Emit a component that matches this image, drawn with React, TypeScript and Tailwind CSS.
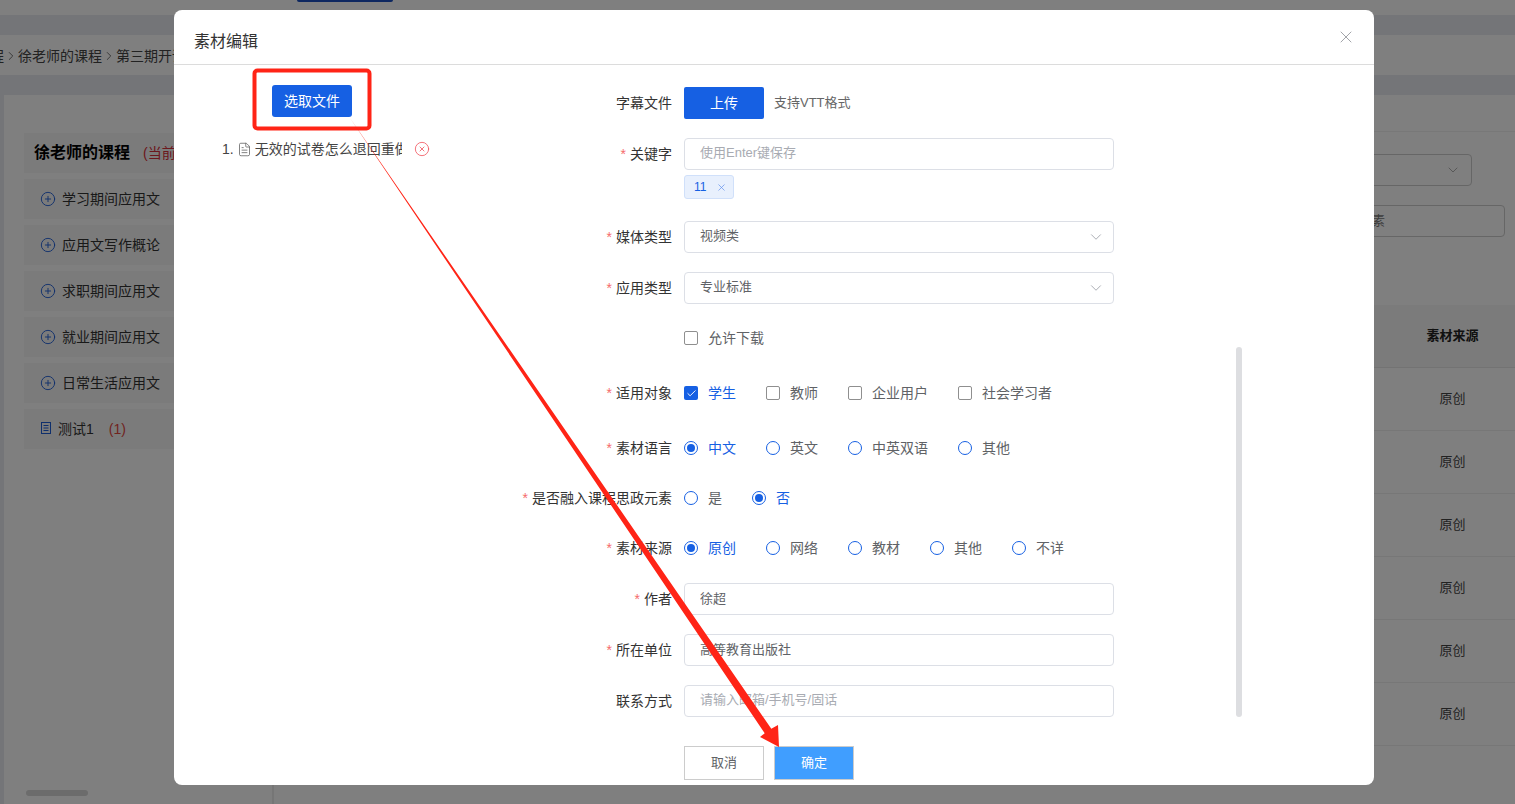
import React from 'react';
import { ChevronDown, CirclePlus, CircleX, FileText, X, ChevronRight, Check } from 'lucide-react';

const sideItems = ['学习期间应用文', '应用文写作概论', '求职期间应用文', '就业期间应用文', '日常生活应用文'];
const tableRows = ['原创', '原创', '原创', '原创', '原创', '原创'];

const Page = () => (
  <div className="h-[804px] flex flex-col bg-[#e8ebf0] overflow-hidden">
    <div className="h-[15px] bg-white shrink-0 pl-[297px]">
      <div className="w-[96px] h-[2px] bg-[#1a4fc0] rounded-b-sm" />
    </div>
    <div className="h-[20px] shrink-0" />
    <div className="h-[40px] bg-white shrink-0 flex items-center text-sm text-[#444] pt-[1px]">
      <span className="-ml-[10px]">程</span>
      <ChevronRight className="w-[14px] h-[14px] text-[#555]" strokeWidth={1.4} />
      <span>徐老师的课程</span>
      <ChevronRight className="w-[14px] h-[14px] text-[#555]" strokeWidth={1.4} />
      <span>第三期开课</span>
    </div>
    <div className="h-[20px] shrink-0" />
    <div className="flex-1 flex ml-[4px] bg-white">
      <div className="w-[270px] shrink-0 flex flex-col pl-[20px] border-r-2 border-[#ececec]">
        <div className="mt-[38px] h-[40px] bg-[#f7f7f7] flex items-center pl-[10px]">
          <span className="text-base font-bold text-black">徐老师的课程</span>
          <span className="ml-[13px] text-sm text-[#d9303a]">(当前</span>
        </div>
        {sideItems.map(t => (
          <div key={t} className="mt-[6px] h-[40px] bg-[#f7f7f7] flex items-center pl-[16px] text-sm text-[#333]">
            <CirclePlus className="w-[16px] h-[16px] text-[#1f5fd8] mr-[6px] -mt-[1px]" strokeWidth={1.4} />
            {t}
          </div>
        ))}
        <div className="mt-[6px] h-[40px] bg-[#f7f7f7] flex items-center pl-[17px] text-sm text-[#333]">
          <svg width="10" height="12" viewBox="0 0 10 12" fill="none" stroke="#1f5fd8" className="mr-[7px] -mt-[2px]">
            <rect x="0.5" y="0.5" width="9" height="11" />
            <path d="M2.5 3.5h5M2.5 6h5M2.5 8.5h5" />
          </svg>
          <span>测试1</span>
          <span className="ml-[15px] text-[#e2483f]">(1)</span>
        </div>
        <div className="mt-auto mb-[8px] ml-[2px] w-[62px] h-[6px] rounded-full bg-[#d8d8d8]" />
      </div>
      <div className="flex-1 flex flex-col">
        <div className="h-[37px] border-b border-[#f0f0f0] shrink-0" />
        <div className="flex justify-end pr-[43px] mt-[22px]">
          <div className="w-[300px] h-[32px] border border-[#ccc] rounded flex items-center justify-end pr-[10px]">
            <ChevronDown className="w-[16px] h-[16px] text-[#888]" strokeWidth={1} />
          </div>
        </div>
        <div className="flex justify-end pr-[10px] mt-[19px]">
          <div className="w-[300px] h-[32px] border border-[#ccc] rounded flex items-center pl-[127px] text-[13px] text-[#777]">
            思政元素
          </div>
        </div>
        <div className="mt-[68px] h-[63px] bg-[#f7f7f7] border-b border-[#e6e6e6] flex items-center justify-end text-[13px] font-bold text-[#222] shrink-0">
          <span className="w-[125px] text-center">素材来源</span>
        </div>
        {tableRows.map((t, i) => (
          <div key={i} className="h-[63px] border-b border-[#eee] flex items-center justify-end text-[13px] text-[#444] shrink-0">
            <span className="w-[125px] text-center">{t}</span>
          </div>
        ))}
      </div>
    </div>
  </div>
);

const Label = ({ text, required }: { text: string; required?: boolean }) => (
  <div className="w-[152px] shrink-0 mr-[12px] -mt-[1px] text-right text-sm text-[#333] whitespace-nowrap">
    {required && <span className="text-[#f56c6c] mr-[4px]">*</span>}
    {text}
  </div>
);

const TextField = ({ value, placeholder }: { value?: string; placeholder?: string }) => (
  <input
    readOnly
    value={value}
    placeholder={placeholder}
    className="w-[430px] h-[32px] border border-[#dcdfe6] rounded px-[15px] pb-[3px] text-[13px] text-[#606266] placeholder:text-[#a8abb2] outline-none"
  />
);

const SelectField = ({ value }: { value: string }) => (
  <div className="w-[430px] h-[32px] border border-[#dcdfe6] rounded pl-[15px] pr-[8px] flex items-center justify-between text-[13px] text-[#606266]">
    <span className="-mt-[2px]">{value}</span>
    <ChevronDown className="w-[18px] h-[18px] text-[#8f939b]" strokeWidth={1} />
  </div>
);

const CheckItem = ({ text, checked }: { text: string; checked?: boolean }) => (
  <div className={`flex items-center gap-[10px] text-sm ${checked ? 'text-[#1660e3]' : 'text-[#606266]'}`}>
    {checked ? (
      <span className="w-[14px] h-[14px] rounded-[2px] bg-[#1660e3] flex items-center justify-center">
        <Check className="w-[11px] h-[11px] text-white" strokeWidth={2} />
      </span>
    ) : (
      <span className="w-[14px] h-[14px] rounded-[2px] border border-[#8f8f8f] bg-white" />
    )}
    <span>{text}</span>
  </div>
);

const RadioItem = ({ text, checked }: { text: string; checked?: boolean }) => (
  <div className={`flex items-center gap-[10px] text-sm ${checked ? 'text-[#1660e3]' : 'text-[#606266]'}`}>
    <span className="w-[14px] h-[14px] rounded-full border border-[#1660e3] bg-white flex items-center justify-center">
      {checked && <span className="w-[8px] h-[8px] rounded-full bg-[#1660e3]" />}
    </span>
    <span>{text}</span>
  </div>
);

const Modal = () => (
  <div className="relative ml-[174px] mt-[10px] w-[1200px] h-[775px] bg-white rounded-lg overflow-hidden">
    <div className="h-[55px] border-b border-[#dcdcdc] flex items-center justify-between pl-[20px] pr-[18px] pt-[9px]">
      <span className="text-base text-[#333]">素材编辑</span>
      <X className="w-[20px] h-[20px] text-[#8f9298] -mt-[10px]" strokeWidth={1} />
    </div>
    <div className="flex">
      <div className="w-[346px] shrink-0 pt-[20px]">
        <button className="ml-[98px] w-[80px] h-[32px] bg-[#1660e3] text-white text-sm rounded-[3px] block">选取文件</button>
        <div className="mt-[22px] ml-[48px] flex items-center text-sm text-[#444] h-[20px]">
          <span>1.</span>
          <FileText className="w-[15px] h-[15px] ml-[3px] text-[#666] shrink-0" strokeWidth={1.3} />
          <span className="ml-[3px] w-[147px] overflow-hidden whitespace-nowrap">无效的试卷怎么退回重做</span>
          <CircleX className="w-[16px] h-[16px] ml-[12px] text-[#f0505a] shrink-0" strokeWidth={1.2} />
        </div>
      </div>
      <div className="flex-1 flex flex-col pt-[22px]">
        <div className="flex items-center h-[32px]">
          <Label text="字幕文件" />
          <button className="w-[80px] h-[32px] bg-[#1660e3] text-white text-sm rounded-[2px]">上传</button>
          <span className="ml-[10px] text-[13px] text-[#666]">支持VTT格式</span>
        </div>
        <div className="flex items-center mt-[19px]">
          <Label text="关键字" required />
          <TextField placeholder="使用Enter键保存" />
        </div>
        <div className="ml-[164px] mt-[5px] w-[50px] h-[24px] bg-[#e8f0fd] border border-[#d0e0fa] rounded-[3px] flex items-center justify-between pl-[9px] pr-[6px] text-xs text-[#1660e3]">
          <span>11</span>
          <X className="w-[11px] h-[11px] text-[#5f8fea]" strokeWidth={1.5} />
        </div>
        <div className="flex items-center mt-[22px]">
          <Label text="媒体类型" required />
          <SelectField value="视频类" />
        </div>
        <div className="flex items-center mt-[19px]">
          <Label text="应用类型" required />
          <SelectField value="专业标准" />
        </div>
        <div className="flex items-center mt-[24px] h-[20px]">
          <Label text="" />
          <CheckItem text="允许下载" />
        </div>
        <div className="flex items-center mt-[35px] h-[20px]">
          <Label text="适用对象" required />
          <div className="flex gap-[30px]">
            <CheckItem text="学生" checked />
            <CheckItem text="教师" />
            <CheckItem text="企业用户" />
            <CheckItem text="社会学习者" />
          </div>
        </div>
        <div className="flex items-center mt-[35px] h-[20px]">
          <Label text="素材语言" required />
          <div className="flex gap-[30px]">
            <RadioItem text="中文" checked />
            <RadioItem text="英文" />
            <RadioItem text="中英双语" />
            <RadioItem text="其他" />
          </div>
        </div>
        <div className="flex items-center mt-[30px] h-[20px]">
          <Label text="是否融入课程思政元素" required />
          <div className="flex gap-[30px]">
            <RadioItem text="是" />
            <RadioItem text="否" checked />
          </div>
        </div>
        <div className="flex items-center mt-[30px] h-[20px]">
          <Label text="素材来源" required />
          <div className="flex gap-[30px]">
            <RadioItem text="原创" checked />
            <RadioItem text="网络" />
            <RadioItem text="教材" />
            <RadioItem text="其他" />
            <RadioItem text="不详" />
          </div>
        </div>
        <div className="flex items-center mt-[25px]">
          <Label text="作者" required />
          <TextField value="徐超" />
        </div>
        <div className="flex items-center mt-[19px]">
          <Label text="所在单位" required />
          <TextField value="高等教育出版社" />
        </div>
        <div className="flex items-center mt-[19px]">
          <Label text="联系方式" />
          <TextField placeholder="请输入邮箱/手机号/固话" />
        </div>
        <div className="flex ml-[164px] mt-[29px] gap-[10px]">
          <button className="w-[80px] h-[34px] border border-[#ccc] bg-white text-[13px] text-[#606266]">取消</button>
          <button className="w-[80px] h-[34px] border border-[#ccc] bg-[#409eff] text-[13px] text-white">确定</button>
        </div>
      </div>
    </div>
    {/* modal scrollbar thumb */}
    <div className="absolute left-[1062px] top-[337px] w-[6px] h-[370px] rounded-full bg-[#dddee1]" />
  </div>
);

export default function App() {
  return (
    <div className="relative w-full h-[804px] overflow-hidden font-['Liberation_Sans','Noto_Sans_CJK_SC',sans-serif]">
      <Page />
      <div className="absolute inset-0 bg-black/50 flex items-start">
        <Modal />
      </div>
      {/* screenshot annotation: red box and arrow */}
      <svg className="absolute inset-0 pointer-events-none" width="1515" height="804">
        <rect x="254.5" y="70.5" width="115" height="58" rx="3" fill="none" stroke="#ff2416" strokeWidth="4" />
        <polygon points="350,118 771.3,728.8 778,725 779,747 760,737 764.7,733.2" fill="#ff2416" />
      </svg>
    </div>
  );
}
